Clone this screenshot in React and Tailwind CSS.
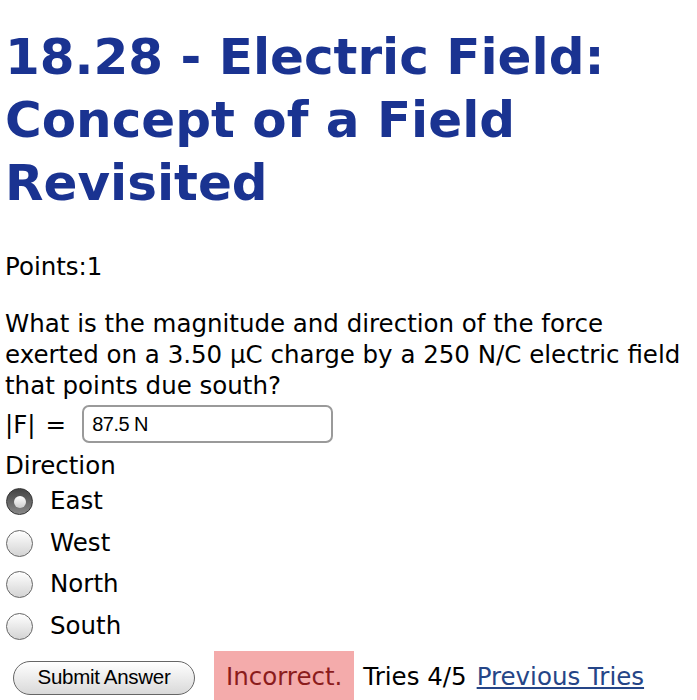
export default function App() {
  const options = ["East", "West", "North", "South"];
  return (
    <div
      className="w-[697px] h-[700px] overflow-hidden bg-white text-black px-[5px]"
      style={{ fontFamily: '"DejaVu Sans", Verdana, sans-serif' }}
    >
      <h1 className="pt-[26px] text-[50px] leading-[63px] font-bold text-[#1a3391]">
        18.28 - Electric Field: Concept of a Field Revisited
      </h1>

      <p className="mt-[36px] text-[24.5px] leading-[31px]">Points:1</p>

      <p className="mt-[26px] text-[24.5px] leading-[31px]">
        What is the magnitude and direction of the force exerted on a 3.50 μC
        charge by a 250 N/C electric field that points due south?
      </p>

      <div className="flex items-center gap-[16px] text-[24.5px] leading-[31px] mt-[4px]">
        <span>
          |F|<span className="ml-[10px]">=</span>
        </span>
        <div
          className="w-[251px] h-[38px] border-2 border-[#9a9a9a] rounded-[7px] flex items-center px-[8px] text-[20px] tracking-[-0.5px]"
          style={{ fontFamily: '"Liberation Sans", Arial, sans-serif' }}
        >
          87.5 N
        </div>
      </div>

      <p className="mt-[7px] text-[24.5px] leading-[31px]">Direction</p>

      <div className="flex flex-col">
        {options.map((o, i) => (
          <div key={o} className="flex items-center h-[41.5px] gap-[17px]">
            {i === 0 ? (
              <span className="ml-[1px] w-[27px] h-[27px] rounded-full bg-gradient-to-b from-[#444] to-[#888] border border-[#333] flex items-center justify-center">
                <span className="w-[12px] h-[12px] rounded-full bg-gradient-to-b from-[#fff] to-[#ccc]" />
              </span>
            ) : (
              <span className="ml-[1px] w-[27px] h-[27px] rounded-full bg-gradient-to-b from-[#fff] to-[#d4d4d4] border border-[#666]" />
            )}
            <span className="text-[24.5px]">{o}</span>
          </div>
        ))}
      </div>

      <div className="flex items-center mt-[4px] h-[53px]">
        <button
          className="ml-[8px] w-[182px] h-[34px] rounded-full border border-[#666] bg-gradient-to-b from-[#ffffff] to-[#d9d9d9] text-[20.5px] text-black tracking-[-0.3px]"
          style={{ fontFamily: '"Liberation Sans", Arial, sans-serif' }}
        >
          Submit Answer
        </button>
        <div className="ml-[19px] h-[53px] px-[12px] flex items-center bg-[#f4abab] text-[#8b1c1c] text-[24.5px]">
          Incorrect.
        </div>
        <span className="ml-[9px] text-[24.5px]">Tries 4/5</span>
        <a href="#" className="ml-[10px] text-[24.5px] text-[#254587] underline">
          Previous Tries
        </a>
      </div>
    </div>
  );
}
